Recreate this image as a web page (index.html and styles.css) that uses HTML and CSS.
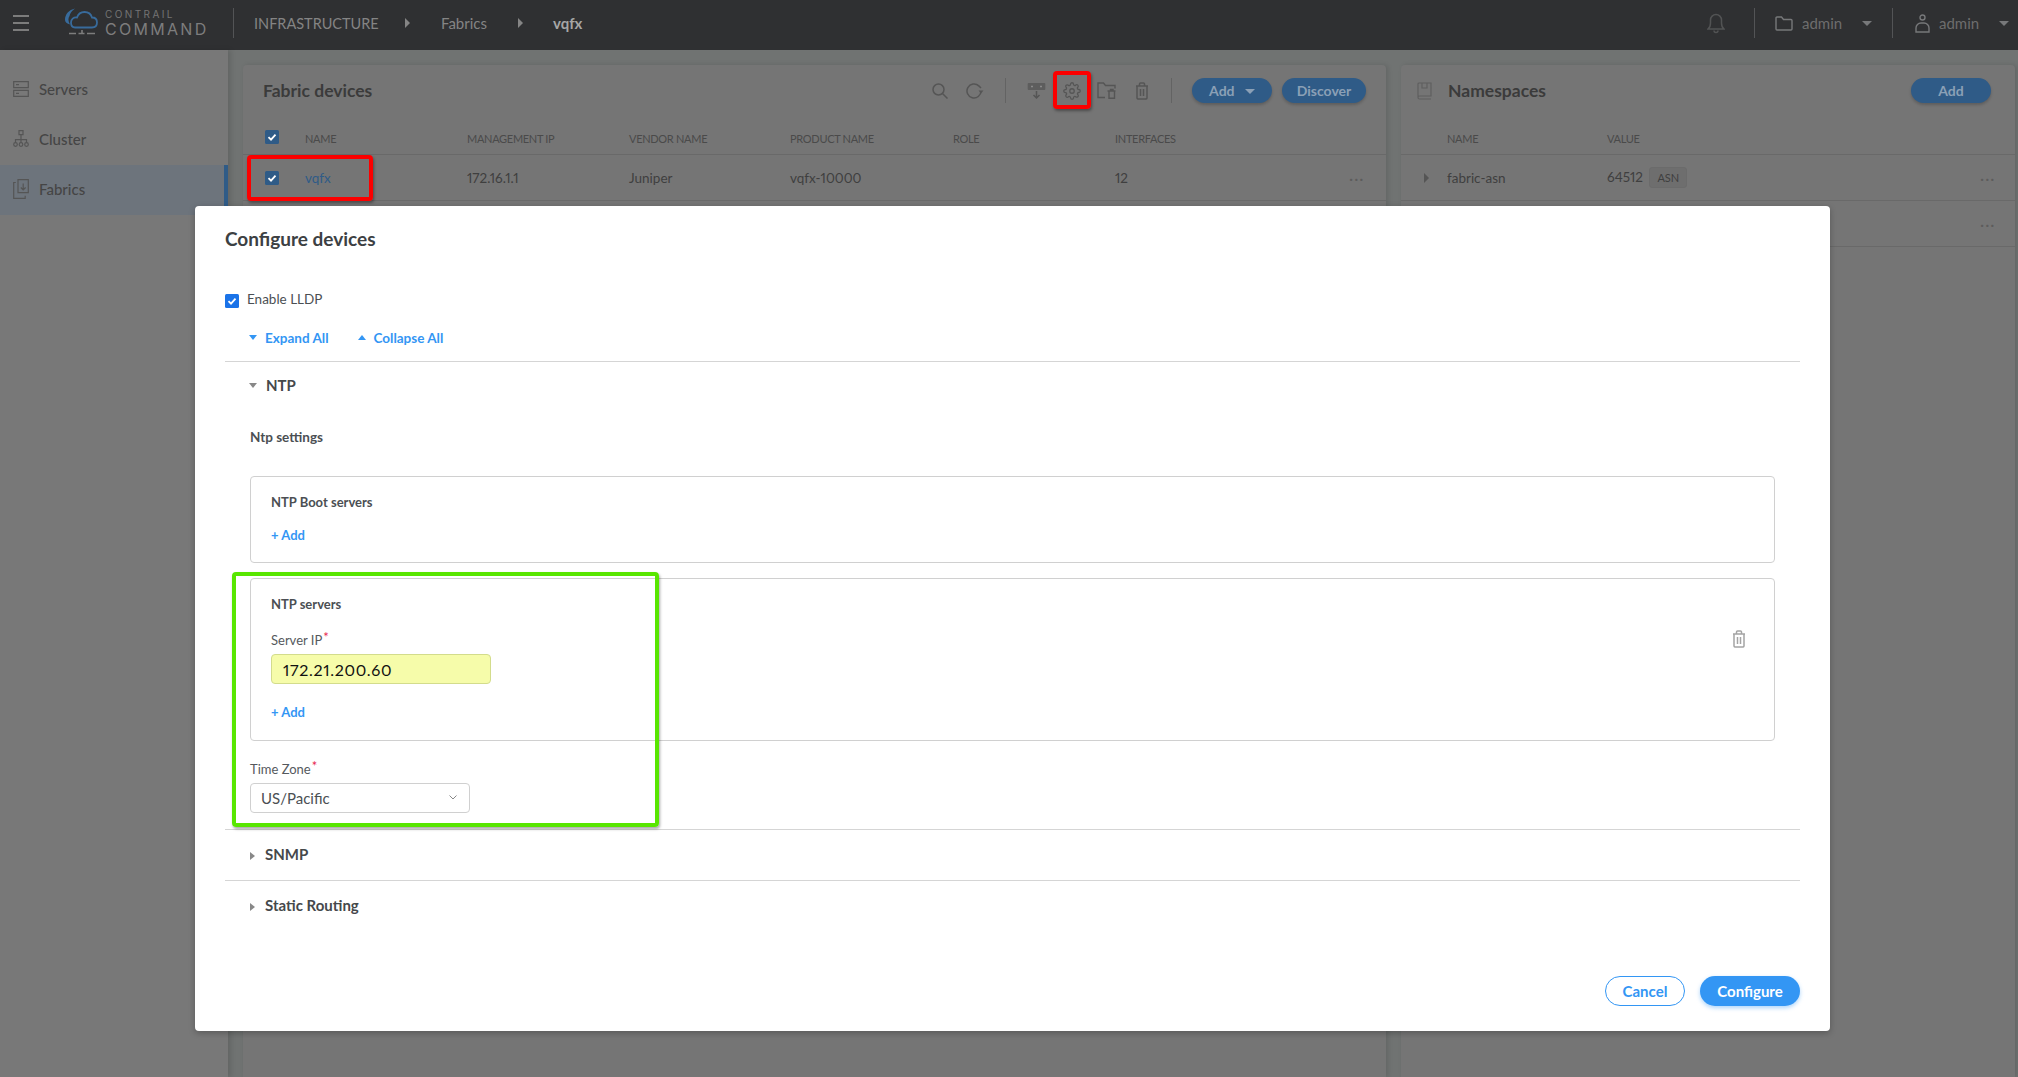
FILE: index.html
```html
<!DOCTYPE html>
<html lang="en">
<head>
    <meta charset="UTF-8">
    <title>Contrail Command</title>
    <link rel="stylesheet" href="styles.css">
</head>
<body>
    <svg class="sprites" width="0" height="0">
        <symbol id="trash" viewBox="0 0 14 18">
            <path d="M1 4h12M2 4v12a1.300 1.300 0 0 0 1.300 1h7.400a1.300 1.300 0 0 0 1.300-1V4M4.500 4V2a1 1 0 0 1 1-1h3a1 1 0 0 1 1 1v2M5.500 7v7M8.500 7v7" fill="none" stroke="currentColor" stroke-width="1.500"/>
        </symbol>
        <symbol id="tick" viewBox="0 0 14 14">
            <rect width="14" height="14" rx="1.500" fill="currentColor"/>
            <path d="M3.500 7.200l2.500 2.500 4.500-5" fill="none" stroke="#fff" stroke-width="1.800"/>
        </symbol>
    </svg>

    <header class="topbar">
        <button class="burger"><span></span><span></span><span></span></button>
        <div class="logo">
            <svg class="logo-mark" width="34" height="28" viewBox="0 0 34 28">
                <path d="M1 12C1 6 5 2 11 0.500C8 3 6 5 5.500 8C4 10 4 13 6 16.500C3 16 1 14 1 12Z" fill="#386b9c"/>
                <path d="M11 19.500H28C31 19.500 33 17.500 33 14.500C33 11.500 31 9.500 28 9.500C27 6 24 4 20.500 4C16.500 4 14 6.500 13 9.500C9.500 9 7 11.500 7 14.500C7 17.500 8.500 19.500 11 19.500Z" fill="none" stroke="#386b9c" stroke-width="1.800"/>
                <path d="M5 25.500h7M14.500 25.500h6M23 25.500h8M18 22v3" fill="none" stroke="#7d7d7d" stroke-width="1.600"/>
            </svg>
            <div class="logo-text">
                <span class="logo-top">CONTRAIL</span>
                <span class="logo-bottom">COMMAND</span>
            </div>
        </div>
        <nav class="crumbs">
            <span class="crumb-root">INFRASTRUCTURE</span>
            <i class="caret-right"></i>
            <span class="crumb-mid">Fabrics</span>
            <i class="caret-right"></i>
            <span class="crumb-last">vqfx</span>
        </nav>
        <div class="top-right">
            <svg class="bell" width="18" height="21" viewBox="0 0 18 21">
                <path d="M1 16c2-1.500 2.500-3 2.500-6V7a5.500 5.500 0 0 1 11 0v3c0 3 .5 4.500 2.500 6ZM7 17.500a2 2 0 0 0 4 0" fill="none" stroke="#525354" stroke-width="1.500"/>
            </svg>
            <div class="top-menu project">
                <svg width="18" height="15" viewBox="0 0 18 15">
                    <path d="M1 13V2a1 1 0 0 1 1-1h4.500l2 2.500H16a1 1 0 0 1 1 1V13a1 1 0 0 1-1 1H2a1 1 0 0 1-1-1Z" fill="none" stroke="#77787a" stroke-width="1.400"/>
                </svg>
                <span>admin</span>
                <i class="caret-down top-caret"></i>
            </div>
            <div class="top-menu user">
                <svg width="15" height="19" viewBox="0 0 15 19">
                    <circle cx="7.500" cy="3.500" r="2.500" fill="none" stroke="#77787a" stroke-width="1.400"/>
                    <path d="M1 18v-4a5 5 0 0 1 5-5h3a5 5 0 0 1 5 5v4Z" fill="none" stroke="#77787a" stroke-width="1.400"/>
                </svg>
                <span>admin</span>
                <i class="caret-down top-caret"></i>
            </div>
        </div>
    </header>

    <div class="layout">
        <aside class="sidebar">
            <a class="side-item">
                <svg width="16" height="16" viewBox="0 0 16 16">
                    <path d="M.7.700h14.600v6H.7ZM.7 9.300h14.600v6H.7ZM3 3.700h3M3 12.300h3" fill="none" stroke="#555" stroke-width="1.200"/>
                </svg>
                Servers
            </a>
            <a class="side-item">
                <svg width="16" height="18" viewBox="0 0 16 18">
                    <path d="M6 .7h4v4H6ZM8 4.700v5M2.500 12.500v-2.800h11v2.800M8 9.700v2.800" fill="none" stroke="#555" stroke-width="1.200"/>
                    <circle cx="2.500" cy="14.500" r="1.800" fill="none" stroke="#555" stroke-width="1.200"/>
                    <circle cx="8" cy="14.500" r="1.800" fill="none" stroke="#555" stroke-width="1.200"/>
                    <circle cx="13.500" cy="14.500" r="1.800" fill="none" stroke="#555" stroke-width="1.200"/>
                </svg>
                Cluster
            </a>
            <a class="side-item active">
                <svg width="16" height="20" viewBox="0 0 16 20">
                    <path d="M5 .7h10.300v13H5ZM2.800 3.500H.7v15.800h11.500v-2.500M10.200 4.500v6M7.800 8.500l2.400 2.400 2.400-2.400" fill="none" stroke="#555" stroke-width="1.200"/>
                </svg>
                Fabrics
            </a>
        </aside>

        <main class="content">
            <section class="panel">
                <div class="panel-head">
                    <h2>Fabric devices</h2>
                    <div class="tools">
                        <svg class="tool search" width="16" height="16" viewBox="0 0 16 16">
                            <circle cx="6.500" cy="6.500" r="5.500" fill="none" stroke="#555" stroke-width="1.500"/>
                            <path d="M10.500 10.500l5 5" stroke="#555" stroke-width="1.500"/>
                        </svg>
                        <svg class="tool refresh" width="18" height="16" viewBox="0 0 18 16">
                            <path d="M15 8a7 7 0 1 1-2.200-5.100L15 5" fill="none" stroke="#555" stroke-width="1.500"/>
                            <path d="M12.500 7.500h5l-2.500 3Z" fill="#555"/>
                        </svg>
                        <span class="tool-sep"></span>
                        <svg class="tool push" width="19" height="17" viewBox="0 0 19 17">
                            <path d="M1.700 1h15.600a1 1 0 0 1 1 1v5a1 1 0 0 1-1 1H1.700a1 1 0 0 1-1-1V2a1 1 0 0 1 1-1Z" fill="#5d5d5d"/>
                            <path d="M4 4.500h2M13 4.500h2" stroke="#8a8a8a" stroke-width="1.400"/>
                            <path d="M9.500 9v7M6.500 13l3 3 3-3" fill="none" stroke="#555" stroke-width="1.500"/>
                        </svg>
                        <svg class="tool gear" width="18" height="18" viewBox="0 0 24 24">
                            <circle cx="12" cy="12" r="3" fill="none" stroke="#555" stroke-width="1.700"/>
                            <path d="M19.400 15a1.650 1.650 0 0 0 .33 1.820l.06.06a2 2 0 0 1 0 2.830 2 2 0 0 1-2.830 0l-.06-.06a1.650 1.650 0 0 0-1.820-.33 1.650 1.650 0 0 0-1 1.510V21a2 2 0 0 1-2 2 2 2 0 0 1-2-2v-.09A1.650 1.650 0 0 0 9 19.400a1.650 1.650 0 0 0-1.820.33l-.06.06a2 2 0 0 1-2.830 0 2 2 0 0 1 0-2.830l.06-.06a1.650 1.650 0 0 0 .33-1.820 1.650 1.650 0 0 0-1.510-1H3a2 2 0 0 1-2-2 2 2 0 0 1 2-2h.09A1.650 1.650 0 0 0 4.600 9a1.650 1.650 0 0 0-.33-1.820l-.06-.06a2 2 0 0 1 0-2.830 2 2 0 0 1 2.830 0l.06.06a1.650 1.650 0 0 0 1.820.33H9a1.650 1.650 0 0 0 1-1.510V3a2 2 0 0 1 2-2 2 2 0 0 1 2 2v.09a1.650 1.650 0 0 0 1 1.510 1.650 1.650 0 0 0 1.820-.33l.06-.06a2 2 0 0 1 2.830 0 2 2 0 0 1 0 2.830l-.06.06a1.650 1.650 0 0 0-.33 1.820V9a1.650 1.650 0 0 0 1.510 1H21a2 2 0 0 1 2 2 2 2 0 0 1-2 2h-.09a1.650 1.650 0 0 0-1.510 1Z" fill="none" stroke="#555" stroke-width="1.700"/>
                        </svg>
                        <svg class="tool folder-del" width="19" height="17" viewBox="0 0 19 17">
                            <path d="M8 15.500H1V1h5.500l2 2.500H18v3" fill="none" stroke="#555" stroke-width="1.400"/>
                            <path d="M10.500 9h8M12 9v7.300h5.500V9M13.500 9V7.500h2.500V9" fill="none" stroke="#555" stroke-width="1.400"/>
                        </svg>
                        <svg class="tool bin" width="14" height="18"><use href="#trash"/></svg>
                        <span class="tool-sep second"></span>
                    </div>
                    <button class="btn-dim add-drop">Add <i class="caret-down"></i></button>
                    <button class="btn-dim discover">Discover</button>
                </div>
                <div class="row devices head">
                    <span class="check-cell"><svg class="dim-check" width="14" height="14"><use href="#tick"/></svg></span>
                    <span>NAME</span><span>MANAGEMENT IP</span><span>VENDOR NAME</span><span>PRODUCT NAME</span><span>ROLE</span><span>INTERFACES</span><span></span>
                </div>
                <div class="row devices">
                    <span class="check-cell"><svg class="dim-check" width="14" height="14"><use href="#tick"/></svg></span>
                    <span class="dim-link">vqfx</span><span>172.16.1.1</span><span>Juniper</span><span>vqfx-10000</span><span></span><span>12</span><span class="dots">···</span>
                </div>
            </section>

            <section class="panel spaces-panel">
                <div class="panel-head">
                    <svg class="book" width="15" height="18" viewBox="0 0 15 18">
                        <path d="M1 15V2a1 1 0 0 1 1-1h12v13H2.500A1.500 1.500 0 0 0 1 15.500 1.500 1.500 0 0 0 2.500 17H14M5 1v5h5V1" fill="none" stroke="#5f5f5f" stroke-width="1.200"/>
                    </svg>
                    <h2>Namespaces</h2>
                    <button class="btn-dim ns-add">Add</button>
                </div>
                <div class="row spaces head">
                    <span></span><span>NAME</span><span>VALUE</span><span></span>
                </div>
                <div class="row spaces">
                    <span class="arrow-cell"><i class="caret-right"></i></span>
                    <span>fabric-asn</span>
                    <span>64512 <b class="badge">ASN</b></span>
                    <span class="dots">···</span>
                </div>
                <div class="row spaces">
                    <span class="arrow-cell"><i class="caret-right"></i></span>
                    <span></span><span></span>
                    <span class="dots">···</span>
                </div>
            </section>
        </main>
    </div>

    <div class="mark red row-mark"></div>
    <div class="mark red gear-mark"></div>

    <div class="modal">
        <h1>Configure devices</h1>
        <label class="lldp">
            <svg class="check" width="14" height="14"><use href="#tick"/></svg>
            Enable LLDP
        </label>
        <div class="expanders">
            <a><i class="caret-down"></i>Expand All</a>
            <a><i class="caret-up"></i>Collapse All</a>
        </div>

        <div class="section">
            <div class="section-head open"><i class="caret-down"></i>NTP</div>
            <div class="section-body">
                <h3>Ntp settings</h3>
                <div class="box">
                    <div class="box-main">
                        <h4>NTP Boot servers</h4>
                        <a class="add-link">+ Add</a>
                    </div>
                </div>
                <div class="box">
                    <div class="box-main">
                        <h4>NTP servers</h4>
                        <label class="field-label server-label">Server IP<em>*</em></label>
                        <input class="text-input" type="text" value="172.21.200.60">
                        <a class="add-link server-add">+ Add</a>
                    </div>
                    <svg class="box-trash" width="14" height="18"><use href="#trash"/></svg>
                </div>
                <label class="field-label zone-label">Time Zone<em>*</em></label>
                <div class="select">
                    US/Pacific
                    <svg width="8" height="5" viewBox="0 0 8 5"><path d="M.5.500l3.500 3.500 3.500-3.500" fill="none" stroke="#888" stroke-width="1"/></svg>
                </div>
            </div>
        </div>
        <div class="section">
            <div class="section-head"><i class="caret-right"></i>SNMP</div>
        </div>
        <div class="section">
            <div class="section-head"><i class="caret-right"></i>Static Routing</div>
        </div>

        <div class="modal-foot">
            <button class="btn-outline">Cancel</button>
            <button class="btn-solid">Configure</button>
        </div>
    </div>

    <div class="mark green zone-mark"></div>
</body>
</html>
```

FILE: styles.css
```css
* {
    box-sizing: border-box;
    font-family: 'Lato', 'Open Sans', sans-serif;
    font-variant-numeric: proportional-nums;
}

html, body {
    margin: 0;
    height: 1077px;
    overflow: hidden;
}

body {
    position: relative;
    background-color: #707372;
    color: #3f3f3f;
    font-size: 14px;
}

h1, h2, h3, h4 {
    margin: 0;
}

button {
    border: 0;
    padding: 0;
    background: none;
}

.sprites {
    position: absolute;
}

/* carets */
.caret-right, .caret-down, .caret-up {
    display: inline-block;
    width: 0;
    height: 0;
}

.caret-right {
    border-top: 5px solid transparent;
    border-bottom: 5px solid transparent;
    border-left: 5px solid #888;
}

.caret-down {
    border-left: 5px solid transparent;
    border-right: 5px solid transparent;
    border-top: 5px solid #888;
}

.caret-up {
    border-left: 5px solid transparent;
    border-right: 5px solid transparent;
    border-bottom: 5px solid #888;
}

/* top bar */
.topbar {
    display: flex;
    align-items: center;
    height: 50px;
    padding-bottom: 4px;
    background-color: #2f3032;
    color: #848484;
}

.burger {
    display: flex;
    flex-direction: column;
    gap: 5px;
    width: 16px;
    margin-left: 13px;
}

.burger span {
    height: 2px;
    background-color: #7c7c7c;
}

.logo {
    display: flex;
    align-items: center;
    gap: 7px;
    width: 170px;
    height: 30px;
    margin-left: 35px;
    border-right: 1px solid #535456;
}

.logo-mark {
    margin-top: -3px;
}

.logo-text {
    display: flex;
    flex-direction: column;
    font-family: 'Inter', sans-serif;
    line-height: 1;
}

.logo-top {
    font-family: inherit;
    font-size: 10px;
    letter-spacing: 2.400px;
    color: #747474;
}

.logo-bottom {
    font-family: inherit;
    margin-top: 2px;
    font-size: 16px;
    letter-spacing: 2.300px;
    color: #7d7d7d;
}

.crumbs {
    display: flex;
    align-items: center;
    margin-left: 20px;
    font-size: 15px;
}

.crumb-root {
    width: 151px;
    font-size: 14.500px;
}

.crumb-mid {
    width: 77px;
    margin-left: 31px;
}

.crumb-last {
    margin-left: 30px;
    font-weight: 700;
    color: #a6a6a6;
}

.crumbs .caret-right {
    border-left-color: #858585;
}

.top-right {
    display: flex;
    align-items: center;
    margin-left: auto;
    height: 30px;
}

.bell {
    margin-right: 29px;
}

.top-menu {
    display: flex;
    align-items: center;
    height: 30px;
    border-left: 1px solid #535456;
    font-size: 15px;
    color: #6d6d6d;
}

.top-menu.project {
    width: 138px;
    padding-left: 20px;
}

.top-menu.project span {
    margin-left: 9px;
}

.top-menu.project .top-caret {
    margin-left: 20px;
}

.top-menu.user {
    width: 126px;
    padding-left: 22px;
}

.top-menu.user span {
    margin-left: 9px;
}

.top-menu.user .top-caret {
    margin-left: 20px;
}

.top-caret {
    border-top-color: #77787a;
}

/* page under the dialog */
.layout {
    display: flex;
    height: 1027px;
}

.sidebar {
    width: 228px;
    padding-top: 15px;
    background-color: #787878;
    box-shadow: 3px 0 5px rgba(0, 0, 0, .12);
}

.side-item {
    display: flex;
    align-items: center;
    gap: 10px;
    height: 50px;
    padding-left: 13px;
    padding-bottom: 2px;
    font-size: 15px;
    font-weight: 500;
    color: #454545;
}

.side-item svg {
    flex: none;
}

.side-item.active {
    background-color: #6d747c;
    border-right: 4px solid #2f5b87;
}

.content {
    display: grid;
    grid-template-columns: 1143px 614px;
    gap: 15px;
    padding: 15px 0 0 15px;
}

.panel {
    background-color: #757575;
    border-radius: 4px 4px 0 0;
    box-shadow: 2px 0 5px rgba(0, 0, 0, .12);
}

.panel-head {
    display: flex;
    align-items: center;
    height: 57px;
    padding: 13px 20px 19px 20px;
}

.spaces-panel .panel-head {
    padding: 13px 24px 19px 16px;
}

.panel-head h2 {
    font-size: 17.500px;
    font-weight: 700;
    color: #3b3b3b;
}

.tools {
    display: flex;
    align-items: center;
    margin-left: auto;
}

.tool-sep {
    width: 1px;
    height: 25px;
    margin: 0 21px;
    background-color: #636363;
}

.tool-sep.second {
    margin: 0 20px 0 22px;
}

.tool.search {
    margin-right: 18px;
}

.tool.push {
    margin-right: 17px;
}

.tool.gear {
    margin-right: 16px;
}

.tool.folder-del {
    margin-right: 19px;
}

.tool.bin {
    color: #555;
}

.btn-dim {
    height: 25px;
    border-radius: 13px;
    background-color: #2f5b87;
    color: #8ba0b6;
    font-size: 14px;
    font-weight: 700;
    box-shadow: 0 2px 3px rgba(0, 0, 0, .2);
}

.add-drop {
    width: 80px;
}

.add-drop .caret-down {
    margin-left: 7px;
    vertical-align: 2px;
    border-top-color: #8ba0b6;
}

.discover {
    width: 84px;
    margin-left: 10px;
}

.ns-add {
    width: 80px;
    margin-left: auto;
}

.book {
    margin-right: 16px;
}

.row {
    display: grid;
    align-items: center;
    height: 46px;
    border-bottom: 1px solid #696969;
    font-size: 13.500px;
    color: #3f3f3f;
}

.row.head {
    height: 33px;
    font-size: 11px;
    letter-spacing: -.3px;
    color: #4a4a4a;
}

.row.devices {
    grid-template-columns: 62px 162px 162px 161px 163px 162px 234px 37px;
}

.row.spaces {
    grid-template-columns: 46px 160px 373px 35px;
}

.check-cell {
    display: flex;
    padding-left: 22px;
}

.head .check-cell {
    margin-top: -2px;
}

.dim-check {
    color: #2f5b87;
}

.dim-link {
    color: #2f5b87;
}

.arrow-cell {
    display: flex;
    padding-left: 23px;
}

.arrow-cell .caret-right {
    border-left-color: #555;
}

.dots {
    color: #5c5c5c;
    font-size: 16px;
    letter-spacing: 1px;
}

.badge {
    display: inline-block;
    margin-left: 3px;
    padding: 0 7px;
    height: 21px;
    line-height: 20px;
    border: 1px solid #6b6b6b;
    border-radius: 3px;
    background-color: #6e6e6e;
    font-size: 11px;
    font-weight: 400;
}

/* dialog */
.modal {
    position: absolute;
    left: 195px;
    top: 206px;
    display: flex;
    flex-direction: column;
    width: 1635px;
    height: 825px;
    padding: 20px 30px 25px;
    background-color: #fff;
    border-radius: 4px;
    box-shadow: 0 2px 6px rgba(0, 0, 0, .25);
}

.modal h1 {
    font-size: 19px;
    line-height: 26px;
    font-weight: 700;
    color: #3c4043;
}

.lldp {
    display: flex;
    align-items: flex-start;
    gap: 8px;
    height: 24px;
    margin-top: 36px;
    font-size: 13.500px;
    line-height: 22px;
    color: #4b4f53;
}

.check {
    margin-top: 6px;
    color: #1a73e8;
}

.expanders {
    display: flex;
    gap: 29px;
    height: 24px;
    margin: 14px 0 11px 24px;
    padding-bottom: 1px;
}

.expanders a {
    display: flex;
    align-items: center;
    gap: 8px;
    font-size: 13.500px;
    font-weight: 700;
    color: #3396f4;
}

.expanders .caret-down {
    border-top-color: #3396f4;
    border-width: 5px 4px 0;
}

.expanders .caret-up {
    border-bottom-color: #3396f4;
    border-width: 0 4px 5px;
}

.section {
    border-top: 1px solid #d5d5d5;
}

.section-head {
    display: flex;
    align-items: center;
    height: 50px;
    padding-left: 25px;
    padding-bottom: 2px;
    font-size: 15px;
    font-weight: 700;
    color: #45484b;
}

.section-head .caret-right {
    margin: 3px 10px 0 0;
    border-top-width: 4px;
    border-bottom-width: 4px;
}

.section-head.open {
    height: 46px;
    padding-left: 24px;
    padding-bottom: 0;
}

.section-head.open .caret-down {
    margin-right: 9px;
    border-width: 5px 4px 0;
}

.section-body {
    padding: 19px 25px 16px 25px;
}

.section-body h3 {
    height: 20px;
    font-size: 13.500px;
    line-height: 20px;
    font-weight: 700;
    color: #4b4f53;
}

.box {
    display: flex;
    justify-content: space-between;
    padding: 15px 28px 17px 20px;
    border: 1px solid #d0d0d0;
    border-radius: 4px;
}

.section-body h3 + .box {
    margin-top: 29px;
}

.box + .box {
    margin-top: 15px;
}

.box-main h4 {
    height: 20px;
    font-size: 13px;
    line-height: 20px;
    font-weight: 700;
    color: #4b4f53;
}

.add-link {
    display: block;
    height: 20px;
    margin-top: 13px;
    font-size: 13px;
    line-height: 20px;
    font-weight: 700;
    color: #3396f4;
}

.server-add {
    margin: 18px 0 1px;
}

.box-trash {
    margin-top: 36px;
    color: #a4a4a4;
}

.field-label {
    display: block;
    height: 20px;
    font-size: 13px;
    line-height: 20px;
    color: #55595d;
}

.field-label em {
    position: relative;
    top: -3px;
    margin-left: 1px;
    color: #e8264e;
    font-style: normal;
}

.server-label {
    margin-top: 16px;
}

.zone-label {
    margin-top: 18px;
}

.text-input {
    display: block;
    width: 220px;
    height: 30px;
    margin-top: 4px;
    padding: 0 11px;
    border: 1px solid #d3dc8c;
    border-radius: 4px;
    background-color: #f6fcaa;
    font-size: 16px;
    letter-spacing: .7px;
    color: #111;
}

.select {
    display: flex;
    align-items: center;
    justify-content: space-between;
    width: 220px;
    height: 30px;
    margin-top: 4px;
    padding: 0 12px 1px 10px;
    border: 1px solid #d0d0d0;
    border-radius: 4px;
    font-size: 15px;
    color: #4b4f53;
}

.modal-foot {
    display: flex;
    justify-content: flex-end;
    gap: 15px;
    margin-top: auto;
}

.btn-outline, .btn-solid {
    height: 30px;
    border-radius: 15px;
    font-size: 15px;
    font-weight: 700;
}

.btn-outline {
    width: 80px;
    border: 1px solid #3396f4;
    color: #3396f4;
}

.btn-solid {
    width: 100px;
    background-color: #3396f4;
    color: #fff;
    box-shadow: 0 2px 4px rgba(51, 150, 244, .4);
}

/* annotation frames drawn over the screenshot */
.mark {
    position: absolute;
    border-width: 4px;
    border-style: solid;
    border-radius: 4px;
    box-shadow: 1px 2px 3px rgba(0, 0, 0, .35);
}

.mark.red {
    border-color: #fc0000;
}

.mark.green {
    border-color: #58e600;
}

.row-mark {
    left: 247px;
    top: 155px;
    width: 126px;
    height: 46px;
}

.gear-mark {
    left: 1053px;
    top: 71px;
    width: 38px;
    height: 38px;
}

.zone-mark {
    left: 232px;
    top: 572px;
    width: 427px;
    height: 255px;
}
```
